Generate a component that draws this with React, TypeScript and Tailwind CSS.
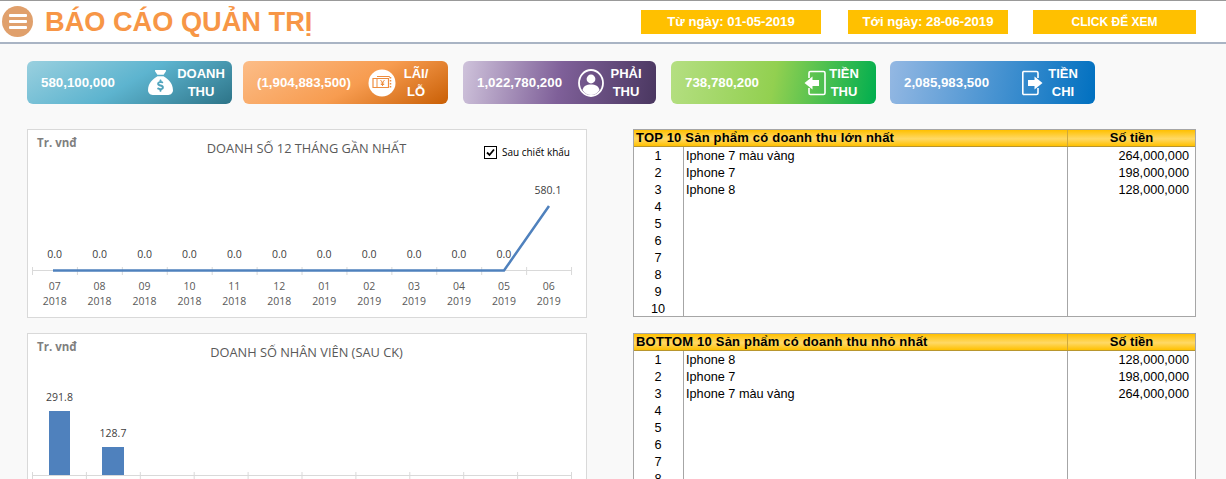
import * as React from "react";
import { FaSackDollar } from "react-icons/fa6";

const months = ["07", "08", "09", "10", "11", "12", "01", "02", "03", "04", "05", "06"];
const topRows = [
  { name: "Iphone 7 màu vàng", amount: "264,000,000" },
  { name: "Iphone 7", amount: "198,000,000" },
  { name: "Iphone 8", amount: "128,000,000" },
];
const bottomRows = [...topRows].reverse();

function TicketIcon() {
  return (
    <svg width="28" height="28" viewBox="0 0 28 28">
      <circle cx="14" cy="14" r="13.5" fill="#fff" />
      <path d="M5 9.500h15.500v9H5z" fill="none" stroke="#ee8d3f" strokeWidth="1.200" />
      <path d="M9 7.500h12.500v1M9 9.500v9" fill="none" stroke="#ee8d3f" strokeWidth="1" />
      <path d="M22.500 8v12" stroke="#ee8d3f" strokeWidth="1.500" strokeDasharray="1.500 1.500" />
      <path d="M12.500 11l2 2.500 2-2.500M14.500 13.500V17M12.800 14h3.400M12.800 15.500h3.400" fill="none" stroke="#ee8d3f" strokeWidth="1" />
    </svg>
  );
}

function PersonIcon() {
  return (
    <svg width="26" height="28" viewBox="0 0 26 28">
      <ellipse cx="13" cy="14" rx="12" ry="13" fill="none" stroke="#fff" strokeWidth="1.800" />
      <circle cx="13" cy="10" r="4.400" fill="#fff" />
      <path d="M4.500 21c.8-4 4-5.600 8.500-5.600s7.700 1.600 8.500 5.600C19.500 24.500 16.500 26 13 26s-6.500-1.500-8.500-5z" fill="#fff" />
    </svg>
  );
}

function EnterIcon() {
  return (
    <svg width="22" height="26" viewBox="0 0 22 26">
      <path d="M5 8V3a1.500 1.500 0 0 1 1.500-1.500h13A1.500 1.500 0 0 1 21 3v20a1.500 1.500 0 0 1-1.500 1.500h-13A1.500 1.500 0 0 1 5 23v-5" fill="none" stroke="#fff" strokeWidth="1.600" />
      <path d="M0.500 13L8.500 6.500V10h6.500v6H8.500v3.500z" fill="#fff" />
    </svg>
  );
}

function ExitIcon() {
  return (
    <svg width="21" height="26" viewBox="0 0 21 26">
      <path d="M16 8V3a1.500 1.500 0 0 0-1.500-1.500h-13A1.500 1.500 0 0 0 0.800 3v20a1.500 1.500 0 0 0 .7 1.500h13A1.500 1.500 0 0 0 16 23v-5" fill="none" stroke="#fff" strokeWidth="1.600" />
      <path d="M20.500 13L12.500 6.500V10H6v6h6.500v3.500z" fill="#fff" />
    </svg>
  );
}

function StatCard({ value, label, icon, className, labelClass }: {
  value: string;
  label: string[];
  icon: React.ReactNode;
  className: string;
  labelClass: string;
}) {
  return (
    <div className={"flex h-[43px] items-center rounded-[6px] pl-[14px] text-white font-bold " + className}>
      <span className="flex-1 text-[13.3px] whitespace-nowrap">{value}</span>
      {icon}
      <div className={"text-center text-[13px] leading-[18px] " + labelClass}>
        {label.map((l) => (
          <div key={l}>{l}</div>
        ))}
      </div>
    </div>
  );
}

function SalesChart() {
  return (
    <svg viewBox="28 130 558 187" className="block h-[187px] w-[558px] font-['Open_Sans',sans-serif]">
      <text x="37" y="147" fontSize="11.500" fontWeight="700" fill="#7f7f7f">Tr. vnđ</text>
      <text x="306.500" y="153" fontSize="12.800" textAnchor="middle" fill="#595959">DOANH SỐ 12 THÁNG GẦN NHẤT</text>
      <line x1="32.500" y1="270.500" x2="571.500" y2="270.500" stroke="#d9d9d9" />
      {Array.from({ length: 13 }, (_, i) => (
        <line key={i} x1={32.500 + i * 44.920} y1="267" x2={32.500 + i * 44.920} y2="275" stroke="#d9d9d9" />
      ))}
      <polyline points="53,270.500 504,270.500 549,206" fill="none" stroke="#4f81bd" strokeWidth="2.500" strokeLinejoin="round" />
      {months.map((m, i) => {
        const x = 54.700 + i * 44.920;
        return (
          <g key={i} fontSize="10.500" textAnchor="middle" fill="#595959">
            {i < 11 && <text x={x} y="258" fill="#404040">0.0</text>}
            <text x={x} y="290">{m}</text>
            <text x={x} y="305">{i < 6 ? "2018" : "2019"}</text>
          </g>
        );
      })}
      <text x="548" y="194" fontSize="10.500" textAnchor="middle" fill="#404040">580.1</text>
    </svg>
  );
}

function StaffChart() {
  return (
    <svg viewBox="28 334 558 187" className="block h-[187px] w-[558px] font-['Open_Sans',sans-serif]">
      <text x="37" y="351" fontSize="11.500" fontWeight="700" fill="#7f7f7f">Tr. vnđ</text>
      <text x="306.500" y="357" fontSize="12.800" textAnchor="middle" fill="#595959">DOANH SỐ NHÂN VIÊN (SAU CK)</text>
      <rect x="49" y="411" width="21" height="64" fill="#4f81bd" />
      <rect x="102" y="447" width="22" height="28" fill="#4f81bd" />
      <text x="59.500" y="401" fontSize="10.500" textAnchor="middle" fill="#404040">291.8</text>
      <text x="113" y="437" fontSize="10.500" textAnchor="middle" fill="#404040">128.7</text>
      <line x1="32.500" y1="475.500" x2="571.500" y2="475.500" stroke="#d9d9d9" />
      {Array.from({ length: 11 }, (_, i) => (
        <line key={i} x1={32.500 + i * 53.900} y1="472" x2={32.500 + i * 53.900} y2="480" stroke="#d9d9d9" />
      ))}
    </svg>
  );
}

function RankTable({ title, rows }: { title: string; rows: { name: string; amount: string }[] }) {
  return (
    <div className="flex h-[188px] w-[563px] flex-col border border-[#a6a6a6] bg-white font-['Liberation_Sans',Arial,sans-serif] text-[12.7px] leading-[17px] text-black">
      <div className="flex h-[17px] shrink-0 border-b border-[#b8962e] bg-[linear-gradient(#ffc000,#ffd966_55%,#ffc000)] text-[13px] leading-[16px] font-bold">
        <div className="flex-1 pl-[2px] tracking-[0.2px] whitespace-nowrap">{title}</div>
        <div className="w-[128px] border-l border-[#d0a93a] text-center">Số tiền</div>
      </div>
      <div className="flex min-h-0 flex-1">
        <div className="w-[49px] shrink-0 pt-px text-center">
          {Array.from({ length: 10 }, (_, i) => (
            <div key={i} className="h-[17px] pr-[1px]">{i + 1}</div>
          ))}
        </div>
        <div className="flex-1 border-l border-[#a6a6a6] pl-[2px] pt-px">
          {rows.map((r) => (
            <div key={r.name} className="h-[17px]">{r.name}</div>
          ))}
        </div>
        <div className="w-[128px] border-l border-[#a6a6a6] pr-[6px] pt-px text-right">
          {rows.map((r) => (
            <div key={r.name} className="h-[17px]">{r.amount}</div>
          ))}
        </div>
      </div>
    </div>
  );
}

export default function App() {
  return (
    <div className="h-[479px] w-[1226px] overflow-hidden bg-[#f9f9f9] font-['Liberation_Sans',Arial,sans-serif]">
      {/* top bar */}
      <header className="flex h-[44px] items-center border-t border-b-2 border-t-[#999999] border-b-[#a9b4c4] bg-white">
        <div className="ml-[2px] flex h-[31px] w-[31px] flex-col items-center justify-center gap-[3px] rounded-full bg-[#e0a06c]">
          <span className="h-[3px] w-[18px] rounded-[1px] bg-white" />
          <span className="h-[3px] w-[18px] rounded-[1px] bg-white" />
          <span className="h-[3px] w-[18px] rounded-[1px] bg-white" />
        </div>
        <h1 className="ml-[12px] w-[268px] text-[27.2px] leading-none font-bold whitespace-nowrap text-[#f79646]">BÁO CÁO QUẢN TRỊ</h1>
        <div className="ml-[328px] flex h-[24px] w-[180px] items-center justify-center bg-[#ffc000] text-[13.2px] font-bold text-white">Từ ngày: 01-05-2019</div>
        <div className="ml-[27px] flex h-[24px] w-[160px] items-center justify-center bg-[#ffc000] text-[13.2px] font-bold text-white">Tới ngày: 28-06-2019</div>
        <div className="ml-[25px] flex h-[24px] w-[163px] items-center justify-center bg-[#ffc000] text-[12px] font-bold text-white">CLICK ĐỂ XEM</div>
      </header>

      {/* stat cards */}
      <div className="mt-[17px] flex pl-[27px]">
        <StatCard
          value="580,100,000"
          label={["DOANH", "THU"]}
          icon={<FaSackDollar size={25} color="#fff" />}
          className="w-[205px] bg-[linear-gradient(150deg,#9ad0df,#5db4cf_50%,#2d7488)]"
          labelClass="ml-[4px] mr-[7px] w-[48px]"
        />
        <StatCard
          value="(1,904,883,500)"
          label={["LÃI/", "LỖ"]}
          icon={<TicketIcon />}
          className="ml-[11px] w-[205px] bg-[linear-gradient(150deg,#fcbd88,#f79c50_55%,#c95f05)]"
          labelClass="ml-[5px] mr-[17px] w-[30px]"
        />
        <StatCard
          value="1,022,780,200"
          label={["PHẢI", "THU"]}
          icon={<PersonIcon />}
          className="ml-[15px] w-[193px] bg-[linear-gradient(100deg,#cfc3db,#7f6099_50%,#4a3760)]"
          labelClass="ml-[6px] mr-[14px] w-[32px]"
        />
        <StatCard
          value="738,780,200"
          label={["TIỀN", "THU"]}
          icon={<EnterIcon />}
          className="ml-[15px] w-[205px] bg-[linear-gradient(100deg,#b5df82,#92d050_50%,#00ae4f)]"
          labelClass="ml-[3px] mr-[17px] w-[30px]"
        />
        <StatCard
          value="2,085,983,500"
          label={["TIỀN", "CHI"]}
          icon={<ExitIcon />}
          className="ml-[14px] w-[205px] bg-[linear-gradient(100deg,#94b8e3,#0070c0)]"
          labelClass="ml-[5px] mr-[17px] w-[30px]"
        />
      </div>

      {/* charts and tables */}
      <div className="mt-[25px] flex pl-[27px]">
        <div className="flex w-[560px] flex-col gap-[15px]">
          <div className="relative h-[189px] border border-[#d9d9d9] bg-white">
            <SalesChart />
            <label className="absolute top-[15px] right-[16px] flex items-center gap-[5px] font-['Open_Sans',sans-serif] text-[10px] text-black">
              <span className="flex h-[13px] w-[13px] items-center justify-center border border-black bg-white">
                <svg width="9" height="9" viewBox="0 0 9 9">
                  <path d="M1 4.500l2.500 2.500L8 1.500" fill="none" stroke="#000" strokeWidth="1.800" />
                </svg>
              </span>
              Sau chiết khấu
            </label>
          </div>
          <div className="h-[189px] border border-[#d9d9d9] bg-white">
            <StaffChart />
          </div>
        </div>
        <div className="ml-[46px] flex flex-col gap-[16px]">
          <RankTable title="TOP 10 Sản phẩm có doanh thu lớn nhất" rows={topRows} />
          <RankTable title="BOTTOM 10 Sản phẩm có doanh thu nhỏ nhất" rows={bottomRows} />
        </div>
      </div>
    </div>
  );
}
